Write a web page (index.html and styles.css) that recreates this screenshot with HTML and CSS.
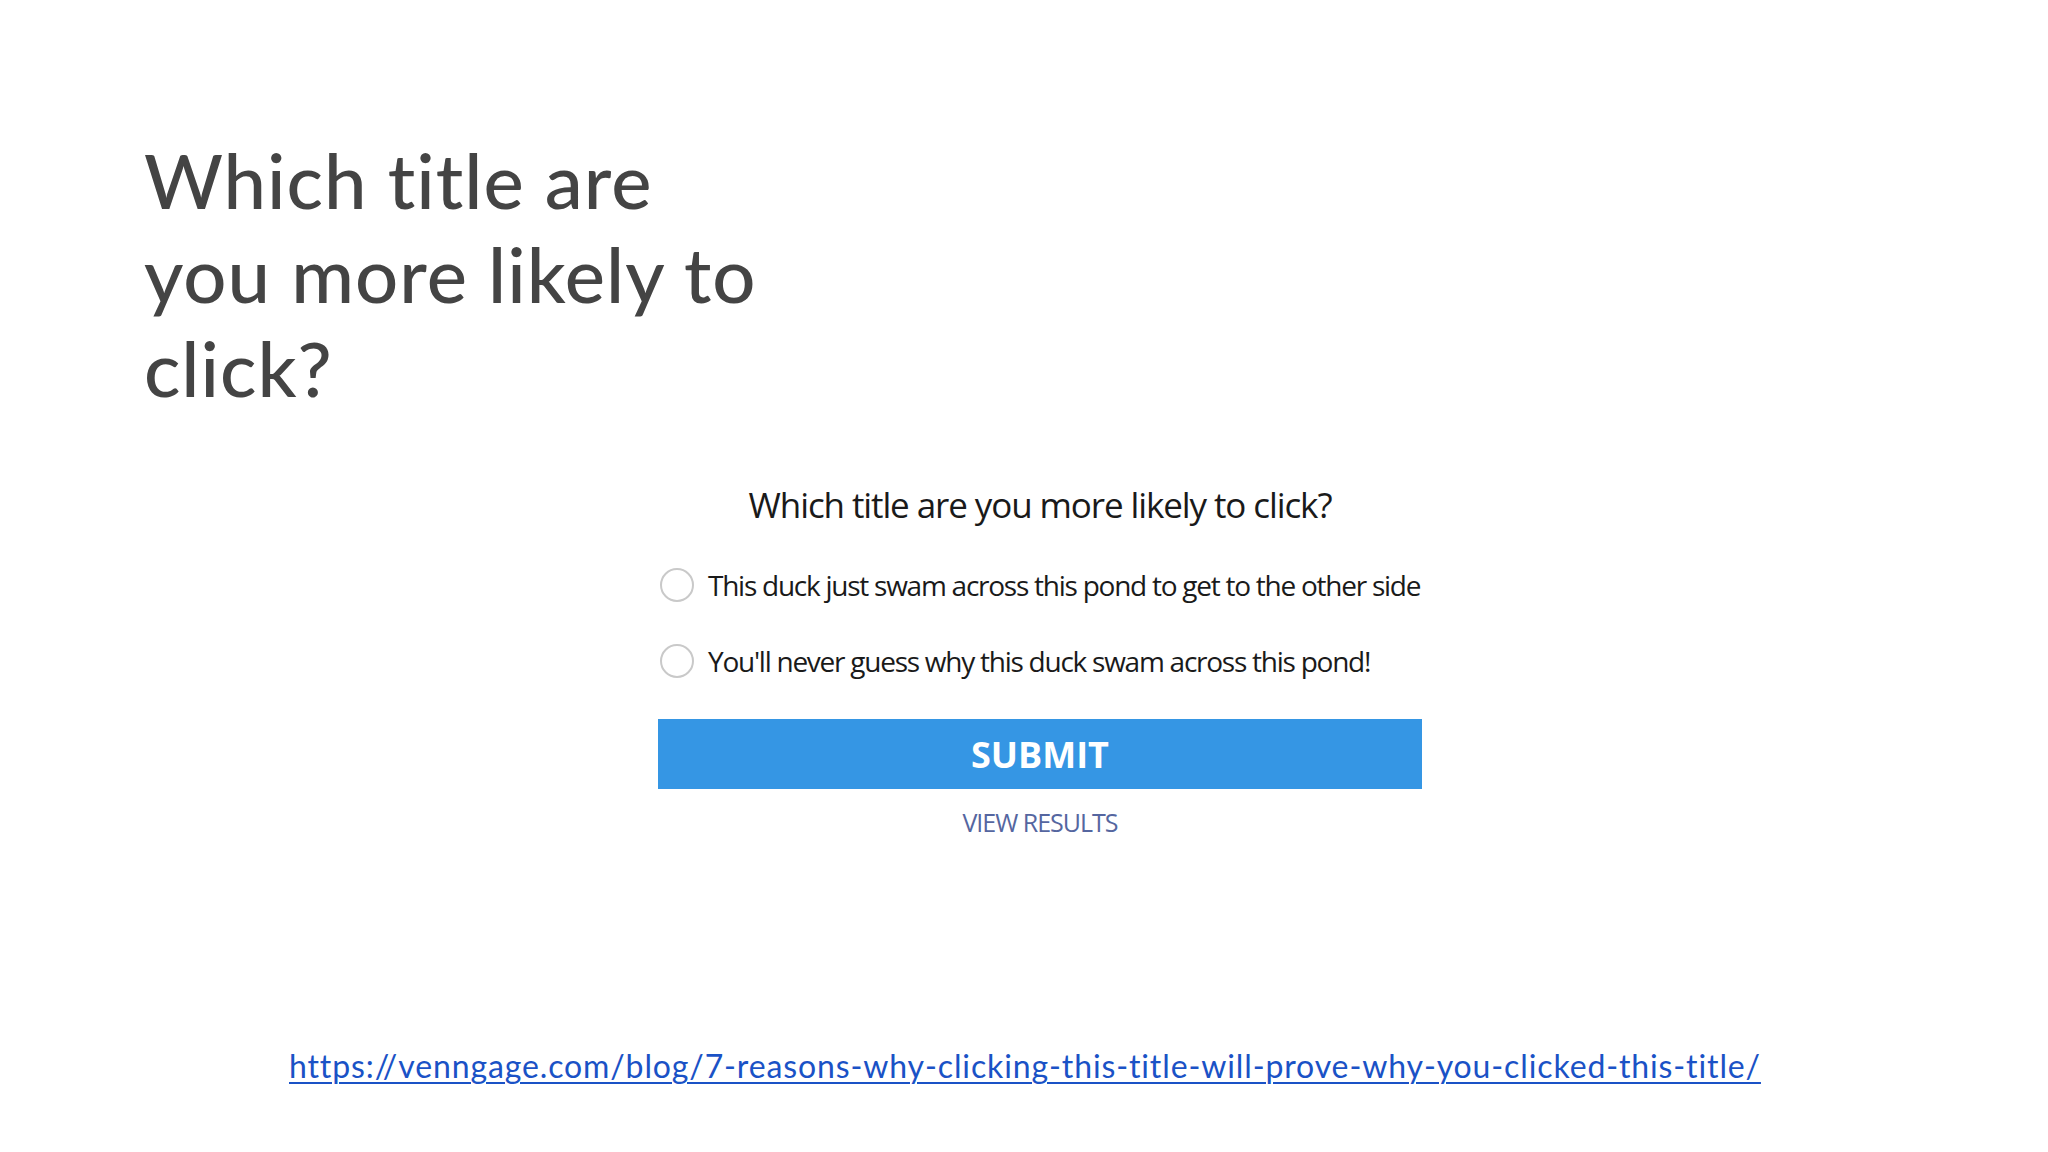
FILE: index.html
```html
<!DOCTYPE html>
<html>
<head>
<meta charset="utf-8">
<link rel="stylesheet" href="styles.css">
</head>
<body>
<div class="slide">
  <h1 class="heading">Which title are<br>you more likely to<br>click?</h1>
  <div class="poll">
    <div class="question">Which title are you more likely to click?</div>
    <div class="options">
      <label class="option"><span class="radio"></span><span class="opt-text">This duck just swam across this pond to get to the other side</span></label>
      <label class="option"><span class="radio"></span><span class="opt-text">You'll never guess why this duck swam across this pond!</span></label>
    </div>
    <div class="submit">SUBMIT</div>
    <div class="results">VIEW RESULTS</div>
  </div>
  <div class="source"><a class="link" href="#">https://venngage.com/blog/7-reasons-why-clicking-this-title-will-prove-why-you-clicked-this-title/</a></div>
</div>
</body>
</html>
```
FILE: styles.css
```css
html, body {
  margin: 0;
  padding: 0;
  background: #ffffff;
}
.slide {
  width: 2048px;
  height: 1152px;
  box-sizing: border-box;
  padding-top: 133px;
  display: flex;
  flex-direction: column;
}
.heading {
  margin: 0 0 0 144px;
  font-family: Lato, "Noto Sans", sans-serif;
  font-weight: 500;
  font-size: 76px;
  line-height: 94px;
  color: #444444;
  letter-spacing: 1px;
}
.poll {
  margin: 70px 0 0 658px;
  width: 764px;
  display: flex;
  flex-direction: column;
  align-items: center;
}
.question {
  font-family: "Open Sans", sans-serif;
  font-size: 35px;
  color: #1a1a1a;
  letter-spacing: -1.1px;
  line-height: 40px;
}
.options {
  align-self: stretch;
  margin-top: 43px;
  display: flex;
  flex-direction: column;
  gap: 42px;
}
.option {
  display: flex;
  align-items: center;
  gap: 14px;
}
.radio {
  width: 34px;
  height: 34px;
  border: 2px solid #c9c9c9;
  border-radius: 50%;
  box-sizing: border-box;
  margin-left: 2px;
  flex: none;
}
.opt-text {
  font-family: "Open Sans", sans-serif;
  font-size: 28px;
  color: #1a1a1a;
  letter-spacing: -1.25px;
  line-height: 34px;
}
.submit {
  align-self: stretch;
  margin-top: 41px;
  height: 70px;
  background: #3596e4;
  color: #ffffff;
  display: flex;
  align-items: center;
  justify-content: center;
  font-family: "Open Sans", sans-serif;
  font-weight: 700;
  font-size: 36px;
  letter-spacing: 0;
}
.results {
  margin-top: 17px;
  font-family: "Open Sans", sans-serif;
  font-size: 25px;
  line-height: 32px;
  color: #5566a0;
  letter-spacing: -1px;
}
.source {
  margin-top: auto;
  margin-bottom: 59px;
  margin-left: 289px;
  line-height: 40px;
}
.link {
  font-family: Lato, "Noto Sans", sans-serif;
  font-size: 32px;
  color: #1a52c6;
  text-decoration: underline;
  text-decoration-thickness: 2px;
  text-underline-offset: 4px;
  letter-spacing: 0.88px;
}
```
